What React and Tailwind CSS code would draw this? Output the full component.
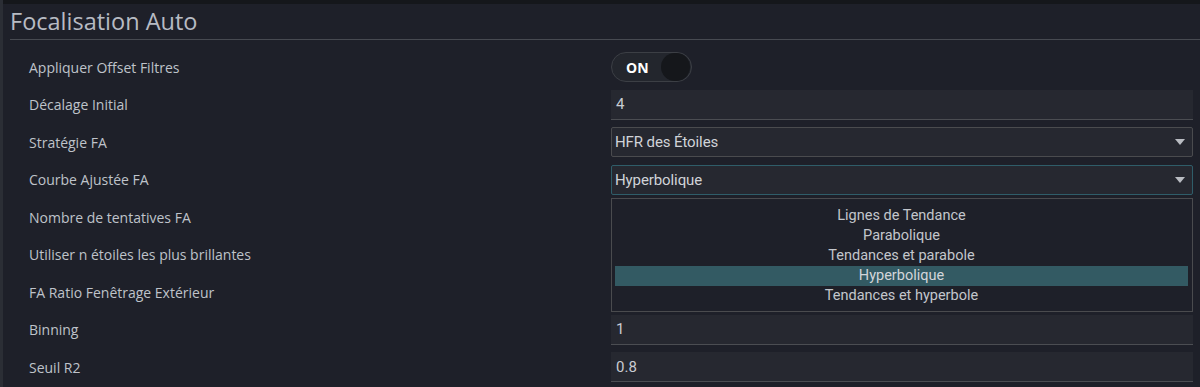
import React from 'react';

const labelFont = { fontFamily: '"Open Sans", "Noto Sans", sans-serif' };

const Caret = () => (
  <svg width="10" height="6" viewBox="0 0 10 6" className="shrink-0">
    <path d="M0 0 L10 0 L5 6 Z" fill="#b9bcc2" />
  </svg>
);

const Row = ({ label, children }) => (
  <div className="flex h-[37.5px] items-center">
    <div className="w-[611px] shrink-0 pl-[29px] text-[14px] text-[#bfc3ca]">{label}</div>
    <div className="w-[582px] shrink-0">{children}</div>
  </div>
);

const Field = ({ value }) => (
  <div className="flex h-[30px] items-center border-b border-[#4b4d52] bg-[#262830] pl-[5px] font-['Roboto'] text-[15px] text-[#c9ccd2]">
    {value}
  </div>
);

const Select = ({ value, active }) => (
  <div
    className={
      'flex h-[30px] items-center justify-between rounded-[2px] border bg-[#262830] pl-[3px] pr-[7px] font-["Roboto"] text-[15px] text-[#d0d3d8] ' +
      (active ? 'border-[#2f5d69]' : 'border-[#4a4b4e]')
    }
  >
    <span className="tracking-[-0.1px]">{value}</span>
    <Caret />
  </div>
);

const Toggle = () => (
  <div className="flex h-[30px] w-[81px] items-center justify-between rounded-full border border-[#3c3f45] bg-[#23262d] pl-[14px] pr-[1px]">
    <span className="font-['Open_Sans'] text-[14px] font-bold text-white">ON</span>
    <span className="h-[28px] w-[29px] rounded-full bg-[#15171b]" />
  </div>
);

const options = [
  'Lignes de Tendance',
  'Parabolique',
  'Tendances et parabole',
  'Hyperbolique',
  'Tendances et hyperbole',
];

export default function App() {
  return (
    <div className="flex h-[387px] w-[1200px] overflow-hidden bg-[#1e2029]" style={labelFont}>
      <div className="w-[3px] shrink-0 bg-[#2b2e35]" />
      <div className="flex flex-1 flex-col">
        <div className="h-[4px] bg-[#15171b]" />
        <div className="ml-[7px] h-[36px] border-b border-[#474a51]">
          <h1 className="text-[23.5px] leading-[34px] text-[#b7bbc3]">Focalisation Auto</h1>
        </div>
        <div className="h-[8.5px]" />
        <div className="-ml-[3px]">
          <Row label="Appliquer Offset Filtres">
            <Toggle />
          </Row>
          <Row label="Décalage Initial">
            <Field value="4" />
          </Row>
          <Row label="Stratégie FA">
            <Select value="HFR des Étoiles" />
          </Row>
          <Row label="Courbe Ajustée FA">
            <div className="relative">
              <Select value="Hyperbolique" active />
              <div className="absolute left-0 top-[33px] z-10 w-full border border-[#4a4b4e] bg-[#1e2029] pb-[5px] pl-[3px] pr-[4px] pt-[7px] font-['Roboto'] text-[14.5px] text-[#c3c6cc]">
                {options.map((o) => (
                  <div
                    key={o}
                    className={
                      'flex h-[20px] items-center justify-center ' +
                      (o === 'Hyperbolique' ? 'bg-[#335a63] text-[#d2d5da]' : '')
                    }
                  >
                    {o}
                  </div>
                ))}
              </div>
            </div>
          </Row>
          <Row label="Nombre de tentatives FA" />
          <Row label="Utiliser n étoiles les plus brillantes" />
          <Row label="FA Ratio Fenêtrage Extérieur" />
          <Row label="Binning">
            <Field value="1" />
          </Row>
          <Row label="Seuil R2">
            <Field value="0.8" />
          </Row>
        </div>
      </div>
    </div>
  );
}
